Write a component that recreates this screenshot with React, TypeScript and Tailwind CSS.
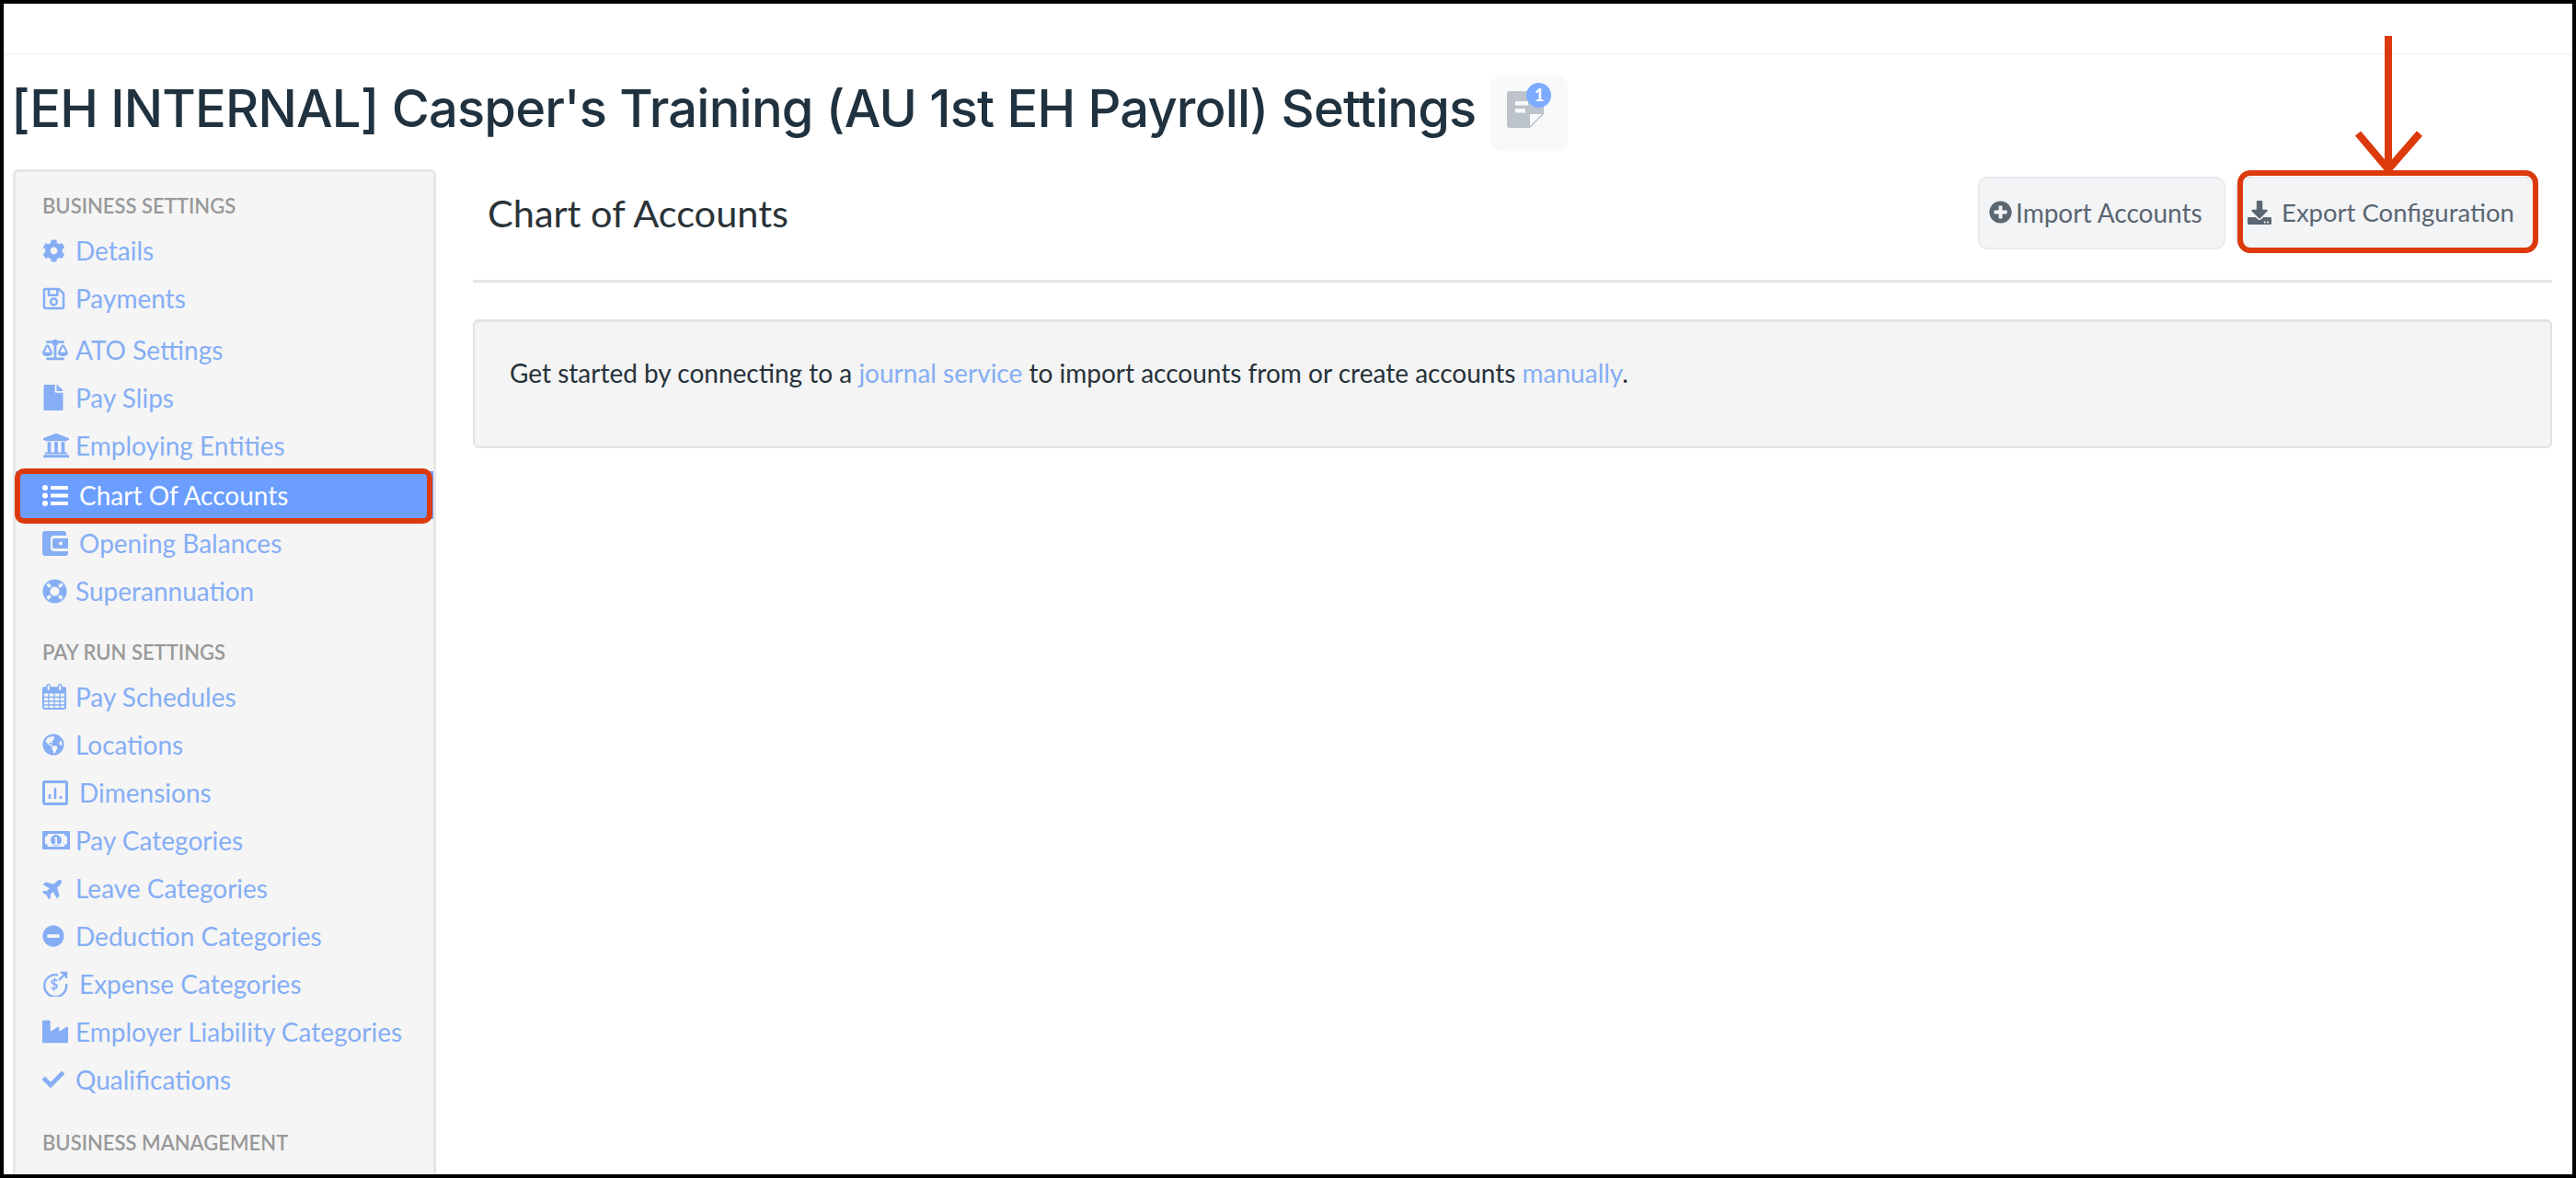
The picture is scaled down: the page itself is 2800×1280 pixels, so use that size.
import React from "react";
import {
  FaCog, FaRegSave, FaBalanceScale, FaFile, FaUniversity, FaLifeRing,
  FaGlobeAmericas, FaPlane, FaMinusCircle, FaIndustry, FaCheck, FaPlusCircle, FaDownload,
} from "react-icons/fa";

type P = { className?: string };

const Wallet = ({ className }: P) => (
  <svg viewBox="0 0 28 27" className={className} fill="currentColor">
    <path fillRule="evenodd" d="M3 0h20a3 3 0 0 1 3 3v2H13a4 4 0 0 0-4 4v9a4 4 0 0 0 4 4h15v2a3 3 0 0 1-3 3H3a3 3 0 0 1-3-3V3a3 3 0 0 1 3-3z" />
    <path fillRule="evenodd" d="M13 8h15v11H13a2 2 0 0 1-2-2v-7a2 2 0 0 1 2-2zm7 3.5a2 2 0 1 0 0 4 2 2 0 0 0 0-4z" />
  </svg>
);

const Expense = ({ className }: P) => (
  <svg viewBox="0 0 28 28" className={className} fill="none" stroke="currentColor" strokeWidth="2.4">
    <path d="M17 4.5A12 12 0 1 0 26 14" />
    <path d="M18 10l8-8M20 2h6v6" />
    <text x="8.5" y="19.5" fontSize="15" fontWeight="700" fill="currentColor" stroke="none" fontFamily="Lato, sans-serif">$</text>
  </svg>
);

const ListIcon = ({ className }: P) => (
  <svg viewBox="0 0 28 23" className={className} fill="currentColor">
    <circle cx="3" cy="3" r="3" />
    <circle cx="3" cy="11.5" r="3" />
    <circle cx="3" cy="20" r="3" />
    <rect x="9" y="1" width="19" height="4" />
    <rect x="9" y="9.5" width="19" height="4" />
    <rect x="9" y="18" width="19" height="4" />
  </svg>
);

const Calendar = ({ className }: P) => (
  <svg viewBox="0 0 26 28" className={className} fill="none" stroke="currentColor">
    <rect x="1" y="4.5" width="24" height="22.5" rx="1.5" strokeWidth="2" />
    <rect x="1" y="4" width="24" height="6" fill="currentColor" strokeWidth="1" />
    <path d="M1 14.5h24M1 19h24M1 23h24M7 10v17M13 10v17M19 10v17" strokeWidth="1.3" />
    <rect x="5" y="0.8" width="3.5" height="7" rx="1.7" fill="#f5f5f5" strokeWidth="1.4" />
    <rect x="17.5" y="0.8" width="3.5" height="7" rx="1.7" fill="#f5f5f5" strokeWidth="1.4" />
  </svg>
);

const ChartBox = ({ className }: P) => (
  <svg viewBox="0 0 28 27" className={className} fill="none" stroke="currentColor">
    <rect x="1.5" y="1.5" width="25" height="24" rx="1.5" strokeWidth="3" />
    <path d="M8 20v-5M14 20V8M20 20v-3" strokeWidth="2.6" />
  </svg>
);

const Bill = ({ className }: P) => (
  <svg viewBox="0 0 30 20" className={className} fill="currentColor">
    <path
      fillRule="evenodd"
      d="M0 0h30v20H0zM6 3a3 3 0 0 1-3 3v8a3 3 0 0 1 3 3h18a3 3 0 0 1 3-3V6a3 3 0 0 1-3-3z"
    />
    <path fillRule="evenodd" d="M15 4a6 6 0 1 0 0 12 6 6 0 0 0 0-12zm-2.5 9.5h1.7V8l-1.7.8V7.6l2.6-1.2h.9v7.1h1.6V15h-5.1z" />
  </svg>
);

type Item = { label: string; icon: React.ReactNode; wide?: boolean; active?: boolean; up?: boolean };

const ic = "w-[24px] h-[24px]";
const business: Item[] = [
  { label: "Details", icon: <FaCog className="h-[25px] w-[25px]" /> },
  { label: "Payments", icon: <FaRegSave className="h-[27px] w-[25px]" /> },
  { label: "ATO Settings", icon: <FaBalanceScale className="w-[28px] h-[26px]" />, up: true },
  { label: "Pay Slips", icon: <FaFile className="w-[24px] h-[28px]" /> },
  { label: "Employing Entities", icon: <FaUniversity className="w-[30px] h-[30px]" /> },
  { label: "Chart Of Accounts", icon: <ListIcon className="w-[28px] h-[23px]" />, wide: true, active: true },
  { label: "Opening Balances", icon: <Wallet className="w-[28px] h-[27px]" />, wide: true },
  { label: "Superannuation", icon: <FaLifeRing className="w-[27px] h-[27px]" /> },
];
const payRun: Item[] = [
  { label: "Pay Schedules", icon: <Calendar className="w-[26px] h-[28px]" /> },
  { label: "Locations", icon: <FaGlobeAmericas className={ic} /> },
  { label: "Dimensions", icon: <ChartBox className="w-[28px] h-[27px]" />, wide: true },
  { label: "Pay Categories", icon: <Bill className="w-[30px] h-[20px]" /> },
  { label: "Leave Categories", icon: <FaPlane className="h-[24px] w-[24px] -rotate-45" /> },
  { label: "Deduction Categories", icon: <FaMinusCircle className={ic} /> },
  { label: "Expense Categories", icon: <Expense className="w-[28px] h-[28px]" />, wide: true },
  { label: "Employer Liability Categories", icon: <FaIndustry className="w-[28px] h-[28px]" /> },
  { label: "Qualifications", icon: <FaCheck className={ic} /> },
];

function NavRow({ item }: { item: Item }) {
  return (
    <div
      className={
        "relative flex h-[52px] items-center pl-[29px] text-[28px] " +
        (item.active ? "mt-[2px] bg-[#6b9eff] text-white" : "text-[#85aef5]") +
        (item.up ? " mt-[4px]" : "")
      }
    >
      <span className={(item.wide ? "w-[40px]" : "w-[36px]") + " flex shrink-0 items-center"}>{item.icon}</span>
      <span>{item.label}</span>
      {item.active && (
        <span className="absolute -top-[3px] -bottom-[5px] left-[-1px] right-[1px] rounded-[10px] border-[6px] border-[#dc3a0c]" />
      )}
    </div>
  );
}

function Heading({ children, className }: { children: React.ReactNode; className?: string }) {
  return (
    <div className={"pl-[29px] text-[22px] font-semibold leading-[30px] text-[#999999] " + (className ?? "")}>
      {children}
    </div>
  );
}

export default function App() {
  return (
    <div
      className="relative h-[1280px] w-[2800px] overflow-hidden border-4 border-black bg-white"
      style={{ fontFamily: "Lato, 'Liberation Sans', sans-serif" }}
    >
      <div className="h-[56px] border-b-2 border-[#f4f5f6]" />

      <div className="flex h-[124px] items-start pl-[8px]">
        <h1
          className="mt-[15px] text-[56px] font-medium leading-[86px] tracking-[-0.8px] text-[#20323f]"
          style={{ fontFamily: "Inter, Lato, sans-serif" }}
        >
          [EH INTERNAL] Casper's Training (AU 1st EH Payroll) Settings
        </h1>
        <div className="relative ml-[16px] mt-[22px] h-[82px] w-[84px] rounded-[12px] bg-[#f8f9fb]">
          <svg viewBox="0 0 40 40" className="absolute left-[18px] top-[17px] h-[40px] w-[40px]">
            <path d="M3 0h34a3 3 0 0 1 3 3v22L25 40H3a3 3 0 0 1-3-3V3a3 3 0 0 1 3-3z" fill="#bcc3cb" />
            <path d="M25 25h13L25 38z" fill="#f8f9fb" />
            <rect x="9" y="11" width="14" height="4.5" fill="#f8f9fb" />
            <rect x="9" y="19" width="11" height="4.5" fill="#f8f9fb" />
          </svg>
          <span className="absolute left-[39px] top-[8px] flex h-[27px] w-[27px] items-center justify-center rounded-full bg-[#7dabff] text-[19px] font-bold text-white">
            1
          </span>
        </div>
      </div>

      <div className="flex gap-[40px] pl-[10px] pr-[22px]">
        <aside className="h-[1100px] w-[460px] shrink-0 rounded-[6px] border-[3px] border-[#e6e6e6] bg-[#f5f5f5] pt-[22px]">
          <Heading className="mb-[7px]">BUSINESS SETTINGS</Heading>
          {business.map((i) => (
            <NavRow key={i.label} item={i} />
          ))}
          <Heading className="mb-[7px] mt-[26px]">PAY RUN SETTINGS</Heading>
          {payRun.map((i) => (
            <NavRow key={i.label} item={i} />
          ))}
          <Heading className="mb-[21px] mt-[28px]">BUSINESS MANAGEMENT</Heading>
          <div className="pl-[29px]">
            <div className="h-[24px] w-[24px] rounded-full bg-[#85aef5]" />
          </div>
        </aside>

        <main className="min-w-0 flex-1">
          <div className="flex h-[123px] items-start justify-between border-b-[3px] border-[#e6e6e6] pl-[16px] pr-[19px]">
            <h2 className="mt-[22px] text-[41.5px] leading-[50px] text-[#2a3338]">Chart of Accounts</h2>
            <div className="mt-[8px] flex gap-[11px]">
              <button className="flex h-[79px] w-[269px] items-center rounded-[10px] border-2 border-[#e8eaee] bg-[#f3f4f6] pb-[2px] pl-[10px] text-[28px] text-[#5a6672]">
                <FaPlusCircle className="mr-[4px] h-[25px] w-[25px]" />
                Import Accounts
              </button>
              <button className="relative flex h-[79px] w-[325px] items-center rounded-[10px] border-2 border-[#e8eaee] bg-[#f3f4f6] pb-[2px] pl-[11px] text-[27.5px] text-[#5a6672]">
                <FaDownload className="mr-[11px] h-[26px] w-[26px]" />
                Export Configuration
                <span className="absolute -top-[9px] -bottom-[6px] left-[0px] right-[-6px] rounded-[14px] border-[6px] border-[#dc3a0c]" />
              </button>
            </div>
          </div>
          <div className="mt-[40px] h-[140px] rounded-[6px] border-2 border-t-[3px] border-[#e3e3e3] bg-[#f4f4f4] pl-[38px] pt-[37px] text-[28px] leading-[36px] text-[#26323a]">
            Get started by connecting to a <span className="text-[#85aef5]">journal service</span> to import accounts from or create accounts <span className="text-[#85aef5]">manually</span>.
          </div>
        </main>
      </div>

      <svg className="pointer-events-none absolute left-[2550px] top-[30px] h-[160px] w-[90px]" viewBox="0 0 90 160" fill="none" stroke="#dc3a0c" strokeWidth="8">
        <path d="M42 5V148" />
        <path d="M9 111l33 39 34-39" />
      </svg>
    </div>
  );
}
